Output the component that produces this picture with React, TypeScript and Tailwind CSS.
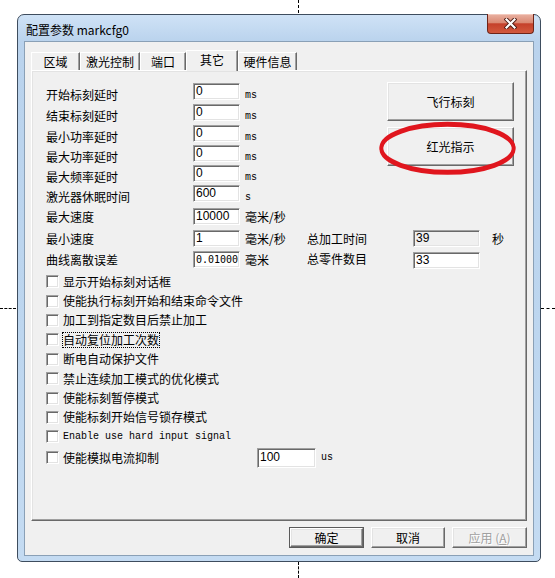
const CJK = "font-['Noto_Sans_CJK_SC',sans-serif]";
const MONO = "font-['Liberation_Mono',monospace]";
const DMONO = "font-['DejaVu_Sans_Mono',monospace]";
const SANS = "font-['Liberation_Sans',sans-serif]";

const sunken =
  "border border-t-[#a0a0a0] border-l-[#a0a0a0] border-r-white border-b-white shadow-[inset_1px_1px_0_#696969,inset_-1px_-1px_0_#e3e3e3]";
const raised =
  "border border-t-white border-l-white border-r-[#696969] border-b-[#696969] shadow-[inset_-1px_-1px_0_#a0a0a0,inset_1px_1px_0_#e3e3e3]";

const DELAYS = [
  { label: "开始标刻延时", value: "0", unit: "ms", h: "h-[21px]" },
  { label: "结束标刻延时", value: "0", unit: "ms", h: "h-[21px]" },
  { label: "最小功率延时", value: "0", unit: "ms", h: "h-[20px]" },
  { label: "最大功率延时", value: "0", unit: "ms", h: "h-[20px]" },
  { label: "最大频率延时", value: "0", unit: "ms", h: "h-[20px]" },
  { label: "激光器休眠时间", value: "600", unit: "s", h: "h-[23px]" },
];

const CHECKS = [
  "显示开始标刻对话框",
  "使能执行标刻开始和结束命令文件",
  "加工到指定数目后禁止加工",
  "自动复位加工次数",
  "断电自动保护文件",
  "禁止连续加工模式的优化模式",
  "使能标刻暂停模式",
  "使能标刻开始信号锁存模式",
];

const TABS = [
  { name: "区域", w: "w-[49px]" },
  { name: "激光控制", w: "w-[60px]" },
  { name: "端口", w: "w-[46px]" },
  { name: "其它", w: "w-[52px]", active: true },
  { name: "硬件信息", w: "w-[59px]" },
];

function Edit({ value, className = "", mono = false, disabled = false }: { value: string; className?: string; mono?: boolean; disabled?: boolean }) {
  return (
    <div
      className={`${sunken} ${disabled ? "bg-[#f0f0f0]" : "bg-white"} pl-[2px] text-black ${mono ? `${DMONO} pt-[1px] text-[10px] leading-[13px]` : `${SANS} pt-[1px] text-[12px] leading-[13px]`} ${className}`}
    >
      {value}
    </div>
  );
}

function Box() {
  return <span className={`${sunken} block h-[13px] w-[13px] shrink-0 bg-white`} />;
}

function Btn({ children, className = "", disabled = false }: { children: React.ReactNode; className?: string; disabled?: boolean }) {
  return (
    <div
      className={`${raised} flex items-center justify-center bg-[#f0f0f0] text-[12px] ${disabled ? "text-[#a0a0a0] [text-shadow:1px_1px_0_#ffffff]" : "text-black"} ${CJK} ${className}`}
    >
      {children}
    </div>
  );
}

export default function App() {
  return (
    <div className="relative h-[578px] w-[555px] overflow-hidden bg-white pl-[17px] pt-[14px]">
      {/* guide marks around the capture */}
      <div className="absolute left-[298px] top-0 h-[13px] border-l border-dashed border-black" />
      <div className="absolute left-[298px] top-[562px] h-[16px] border-l border-dashed border-black" />
      <div className="absolute left-0 top-[308px] w-[16px] border-t border-dashed border-black" />
      <div className="absolute left-[541px] top-[308px] w-[14px] border-t border-dashed border-black" />

      <div className="flex h-[548px] w-[524px] flex-col rounded-t-[7px] rounded-b-[5px] border border-[#3e4d5e] bg-[linear-gradient(to_bottom,#cfe2f6,#bad3ed_26px,#bdd6ef_60%,#c4dbf2)]">
        {/* title bar */}
        <div className="flex h-[26px] items-start pl-[8px] pr-[6px]">
          <span className={`mt-[7px] text-[12px] leading-[16px] text-black ${CJK}`}>配置参数 markcfg0</span>
          <div className="-mt-px ml-auto flex h-[20px] w-[47px] items-center justify-center rounded-b-[4px] border border-t-0 border-[#6e2418] bg-[linear-gradient(to_bottom,#e9b2a3_0%,#db8a74_45%,#c5412b_52%,#d2593e_100%)] shadow-[inset_0_1px_0_#f3c9bd]">
            <svg width="13" height="11" viewBox="0 0 13 11">
              <path d="M2.5 1.5 L10.5 9.5 M10.5 1.5 L2.5 9.5" stroke="#4a1a12" strokeWidth="4" strokeLinecap="square" />
              <path d="M2.5 1.5 L10.5 9.5 M10.5 1.5 L2.5 9.5" stroke="#ffffff" strokeWidth="2.2" strokeLinecap="square" />
            </svg>
          </div>
        </div>

        {/* client area */}
        <div className="flex flex-1 flex-col px-[6px] pb-[5px]">
          <div className="flex flex-1 flex-col border border-[#8aa0b6] bg-[#f0f0f0] px-[6px] pb-[7px] pt-[8px]">
            {/* tabs */}
            <div className="flex h-[20px] items-end">
              {TABS.map((t) =>
                t.active ? (
                  <div
                    key={t.name}
                    className={`${t.w} relative z-10 -mb-px flex h-[21px] justify-center border-l border-t border-r border-l-white border-t-white border-r-[#696969] bg-[#f0f0f0] pt-[1px] text-[12px] leading-[16px] text-black shadow-[inset_-1px_0_0_#a0a0a0] ${CJK}`}
                  >
                    {t.name}
                  </div>
                ) : (
                  <div
                    key={t.name}
                    className={`${t.w} flex h-[18px] justify-center border-l border-t border-r border-l-white border-t-white border-r-[#696969] bg-[#f0f0f0] pt-[1px] text-[12px] leading-[16px] text-black shadow-[inset_-1px_0_0_#a0a0a0] ${CJK}`}
                  >
                    {t.name}
                  </div>
                ),
              )}
            </div>

            {/* tab page */}
            <div className={`${raised} h-[451px] bg-[#f0f0f0] pl-[14px] pt-[12px] text-[12px] text-black ${CJK}`}>
              <div className="flex">
                <div className="flex flex-col">
                  {DELAYS.map((d) => (
                    <div key={d.label} className={`flex items-start ${d.h}`}>
                      <span className="w-[147px] pt-[4px] leading-[16px]">{d.label}</span>
                      <Edit value={d.value} className="h-[17px] w-[47px]" />
                      <span className={`ml-[5px] pt-[5px] text-[10px] leading-[16px] ${MONO}`}>{d.unit}</span>
                    </div>
                  ))}
                </div>
                <div className="-mt-px ml-auto mr-[12px] flex flex-col gap-[6px]">
                  <Btn className="h-[39px] w-[127px]">飞行标刻</Btn>
                  <div className="relative">
                    <Btn className="h-[39px] w-[127px]">红光指示</Btn>
                    <svg className="absolute left-[-10px] top-[-7px]" width="142" height="58" viewBox="0 0 142 58">
                      <ellipse cx="70.5" cy="27.6" rx="66.2" ry="24" fill="none" stroke="#e0161e" strokeWidth="3.6" />
                      <ellipse cx="70.5" cy="29" rx="66.2" ry="24" fill="none" stroke="#e0161e" strokeWidth="3.6" />
                    </svg>
                  </div>
                </div>
              </div>

              <div className="flex h-[22px] items-start">
                <span className="w-[147px] pt-[1px] leading-[16px]">最大速度</span>
                <Edit value="10000" className="h-[17px] w-[47px]" />
                <span className="ml-[5px] pt-[1px] leading-[16px]">毫米/秒</span>
              </div>
              <div className="flex h-[21px] items-start">
                <div className="flex w-[261px] items-start">
                  <span className="w-[147px] pt-[1px] leading-[16px]">最小速度</span>
                  <Edit value="1" className="h-[17px] w-[47px]" />
                  <span className="ml-[5px] pt-[1px] leading-[16px]">毫米/秒</span>
                </div>
                <span className="w-[106px] pt-[1px] leading-[16px]">总加工时间</span>
                <Edit value="39" disabled className="h-[17px] w-[67px]" />
                <span className="ml-[12px] pt-[1px] leading-[16px]">秒</span>
              </div>
              <div className="flex h-[21px] items-start">
                <div className="flex w-[261px] items-start">
                  <span className="w-[147px] pt-[1px] leading-[16px]">曲线离散误差</span>
                  <Edit value="0.01000" mono className="h-[17px] w-[47px]" />
                  <span className="ml-[5px] pt-[1px] leading-[16px]">毫米</span>
                </div>
                <span className="w-[106px] leading-[16px]">总零件数目</span>
                <Edit value="33" className="mt-[1px] h-[17px] w-[67px]" />
              </div>

              <div className="flex flex-col">
                {CHECKS.map((c, i) => (
                  <div key={c} className="flex h-[19.4px] items-center">
                    <Box />
                    <span
                      className={`ml-[4px] ${i === 3 ? "leading-[14px] outline-1 outline-offset-0 outline-dotted outline-black" : "leading-[16px]"}`}
                    >
                      {c}
                    </span>
                  </div>
                ))}
                <div className="flex h-[19.4px] items-center">
                  <Box />
                  <span className={`ml-[4px] text-[10px] leading-[16px] ${MONO}`}>Enable use hard input signal</span>
                </div>
                <div className="flex h-[22px] items-center">
                  <Box />
                  <span className="ml-[4px] w-[194px] leading-[16px]">使能模拟电流抑制</span>
                  <Edit value="100" className="h-[20px] w-[59px] pt-[2px]" />
                  <span className={`ml-[5px] text-[10px] leading-[16px] ${MONO}`}>us</span>
                </div>
              </div>
            </div>

            {/* dialog buttons */}
            <div className="mt-[6px] flex justify-end gap-[7px]">
              <div className="h-[21px] w-[75px] border border-[#5a5a5a]">
                <Btn className="h-full w-full">确定</Btn>
              </div>
              <Btn className="h-[21px] w-[74px]">取消</Btn>
              <Btn disabled className="h-[21px] w-[75px]">
                应用 (<span className="underline">A</span>)
              </Btn>
            </div>
          </div>
        </div>
      </div>
    </div>
  );
}
